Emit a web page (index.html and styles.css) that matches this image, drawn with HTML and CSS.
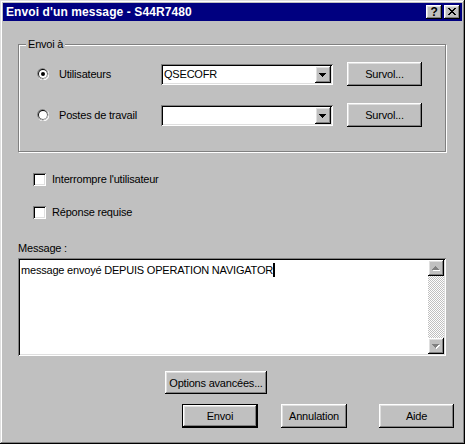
FILE: index.html
```
<!DOCTYPE html>
<html lang="fr">
<head>
<meta charset="utf-8">
<title>Envoi d'un message - S44R7480</title>
<link rel="stylesheet" href="styles.css">
</head>
<body>
<div class="window">
  <div class="titlebar">
    <span class="title">Envoi d'un message - S44R7480</span>
    <div class="tbtns">
      <span class="tbtn raised help">?</span>
      <span class="tbtn raised">
        <svg width="16" height="14" viewBox="0 0 16 14" shape-rendering="crispEdges">
          <g fill="#000">
            <rect x="4" y="3" width="2" height="1"/><rect x="10" y="3" width="2" height="1"/>
            <rect x="5" y="4" width="2" height="1"/><rect x="9" y="4" width="2" height="1"/>
            <rect x="6" y="5" width="4" height="1"/>
            <rect x="7" y="6" width="2" height="1"/>
            <rect x="6" y="7" width="4" height="1"/>
            <rect x="5" y="8" width="2" height="1"/><rect x="9" y="8" width="2" height="1"/>
            <rect x="4" y="9" width="2" height="1"/><rect x="10" y="9" width="2" height="1"/>
          </g>
        </svg>
      </span>
    </div>
  </div>

  <div class="content">
    <fieldset class="group">
      <legend class="legend">Envoi à</legend>
      <div class="group-body">
        <div class="row">
          <label class="radio">
            <svg class="rb" width="12" height="12" viewBox="0 0 12 12">
              <circle cx="6.3" cy="6.3" r="6" fill="#fff"/>
              <circle cx="5.7" cy="5.7" r="5.7" fill="#808080"/>
              <circle cx="6.1" cy="6.1" r="5" fill="#dfdfdf"/>
              <circle cx="5.8" cy="5.8" r="4.7" fill="#000"/>
              <circle cx="6" cy="6" r="4" fill="#fff"/>
              <circle cx="6" cy="6" r="2" fill="#000"/>
            </svg>
            <span>Utilisateurs</span>
          </label>
          <div class="combo sunken">
            <span class="combo-text">QSECOFR</span>
            <span class="drop raised">
              <svg width="16" height="17" viewBox="0 0 16 17" shape-rendering="crispEdges">
                <g fill="#000">
                  <rect x="4" y="7" width="7" height="1"/>
                  <rect x="5" y="8" width="5" height="1"/>
                  <rect x="6" y="9" width="3" height="1"/>
                  <rect x="7" y="10" width="1" height="1"/>
                </g>
              </svg>
            </span>
          </div>
          <button class="btn raised survol">Survol...</button>
        </div>
        <div class="row">
          <label class="radio">
            <svg class="rb" width="12" height="12" viewBox="0 0 12 12">
              <circle cx="6.3" cy="6.3" r="6" fill="#fff"/>
              <circle cx="5.7" cy="5.7" r="5.7" fill="#808080"/>
              <circle cx="6.1" cy="6.1" r="5" fill="#dfdfdf"/>
              <circle cx="5.8" cy="5.8" r="4.7" fill="#000"/>
              <circle cx="6" cy="6" r="4" fill="#fff"/>
            </svg>
            <span>Postes de travail</span>
          </label>
          <div class="combo sunken">
            <span class="combo-text"></span>
            <span class="drop raised">
              <svg width="16" height="17" viewBox="0 0 16 17" shape-rendering="crispEdges">
                <g fill="#000">
                  <rect x="4" y="7" width="7" height="1"/>
                  <rect x="5" y="8" width="5" height="1"/>
                  <rect x="6" y="9" width="3" height="1"/>
                  <rect x="7" y="10" width="1" height="1"/>
                </g>
              </svg>
            </span>
          </div>
          <button class="btn raised survol">Survol...</button>
        </div>
      </div>
    </fieldset>

    <div class="checks">
      <label class="check"><span class="cb sunken"></span><span>Interrompre l'utilisateur</span></label>
      <label class="check"><span class="cb sunken"></span><span>Réponse requise</span></label>
    </div>

    <div class="msg-label">Message :</div>
    <div class="memo sunken">
      <div class="memo-text">message envoyé DEPUIS OPERATION NAVIGATOR<span class="caret"></span></div>
      <div class="vscroll">
        <span class="sbtn raised">
          <svg width="16" height="16" viewBox="0 0 16 16" shape-rendering="crispEdges">
            <g fill="#fff">
              <rect x="8" y="7" width="1" height="1"/><rect x="7" y="8" width="3" height="1"/>
              <rect x="6" y="9" width="5" height="1"/><rect x="5" y="10" width="7" height="1"/>
            </g>
            <g fill="#808080">
              <rect x="7" y="6" width="1" height="1"/><rect x="6" y="7" width="3" height="1"/>
              <rect x="5" y="8" width="5" height="1"/><rect x="4" y="9" width="7" height="1"/>
            </g>
          </svg>
        </span>
        <span class="track"></span>
        <span class="sbtn raised">
          <svg width="16" height="16" viewBox="0 0 16 16" shape-rendering="crispEdges">
            <g fill="#fff">
              <rect x="5" y="7" width="7" height="1"/><rect x="6" y="8" width="5" height="1"/>
              <rect x="7" y="9" width="3" height="1"/><rect x="8" y="10" width="1" height="1"/>
            </g>
            <g fill="#808080">
              <rect x="4" y="6" width="7" height="1"/><rect x="5" y="7" width="5" height="1"/>
              <rect x="6" y="8" width="3" height="1"/><rect x="7" y="9" width="1" height="1"/>
            </g>
          </svg>
        </span>
      </div>
    </div>

    <div class="opt-row">
      <button class="btn raised options">Options avancées...</button>
    </div>

    <div class="actions">
      <button class="btn raised default envoi">Envoi</button>
      <button class="btn raised annul">Annulation</button>
      <button class="btn raised aide">Aide</button>
    </div>
  </div>
</div>
</body>
</html>
```
FILE: styles.css
```
html, body {
  margin: 0;
  padding: 0;
  background: #c0c0c0;
}

body {
  font-family: "Liberation Sans", Arial, sans-serif;
  font-size: 11px;
  letter-spacing: -0.2px;
  color: #000;
}

.window {
  width: 465px;
  height: 444px;
  box-sizing: border-box;
  padding: 3px;
  background: #c0c0c0;
  box-shadow: inset -1px -1px #000, inset 1px 1px #dfdfdf, inset -2px -2px #808080, inset 2px 2px #fff;
  display: flex;
  flex-direction: column;
}

.raised {
  background: #c0c0c0;
  box-shadow: inset -1px -1px #000, inset 1px 1px #fff, inset -2px -2px #808080, inset 2px 2px #dfdfdf;
}

.sunken {
  background: #fff;
  box-shadow: inset 1px 1px #808080, inset -1px -1px #fff, inset 2px 2px #000, inset -2px -2px #dfdfdf;
}

/* Title bar */
.titlebar {
  height: 18px;
  flex: none;
  background: #000080;
  color: #fff;
  display: flex;
  align-items: center;
  justify-content: space-between;
  padding: 0 2px 0 3px;
}

.title {
  font-weight: bold;
  font-size: 12px;
  letter-spacing: 0.1px;
}

.tbtns {
  display: flex;
  gap: 2px;
}

.tbtn {
  width: 16px;
  height: 14px;
  display: flex;
  align-items: center;
  justify-content: center;
  color: #000;
}

.tbtn.help {
  font-weight: bold;
  font-size: 12px;
  line-height: 14px;
}

/* Content */
.content {
  flex: 1;
  display: flex;
  flex-direction: column;
}

.group {
  margin: 17px 0 0 15px;
  padding: 0;
  width: 428px;
  box-sizing: border-box;
  border: 1px solid #808080;
  box-shadow: 1px 1px #fff, inset 1px 1px #fff;
  min-width: 0;
}

.legend {
  margin-left: 7px;
  padding: 0 2px;
  line-height: 13px;
  background: #c0c0c0;
}

.group-body {
  padding: 11px 0 24px 18px;
}

.row {
  display: flex;
  align-items: center;
  height: 24px;
}

.row + .row {
  margin-top: 17px;
}

.radio {
  width: 124px;
  display: flex;
  align-items: center;
  gap: 10px;
}

.rb {
  flex: none;
}

.combo {
  width: 172px;
  height: 21px;
  box-sizing: border-box;
  padding: 2px;
  display: flex;
  align-items: center;
  justify-content: space-between;
}

.combo-text {
  padding-left: 1px;
}

.drop {
  width: 16px;
  height: 17px;
  display: block;
}

.drop svg {
  display: block;
}

.btn {
  font: inherit;
  letter-spacing: inherit;
  color: #000;
  border: 0;
  padding: 0;
  margin: 0;
  height: 23px;
  display: flex;
  align-items: center;
  justify-content: center;
}

.survol {
  width: 75px;
  height: 24px;
  margin-left: 14px;
}

/* Checkboxes */
.checks {
  margin: 21px 0 0 30px;
  display: flex;
  flex-direction: column;
  gap: 20px;
}

.check {
  display: flex;
  align-items: center;
  gap: 6px;
  line-height: 13px;
}

.cb {
  width: 13px;
  height: 13px;
  display: block;
}

/* Message */
.msg-label {
  margin: 23px 0 0 15px;
  line-height: 13px;
}

.memo {
  margin: 3px 0 0 15px;
  width: 428px;
  height: 98px;
  box-sizing: border-box;
  padding: 2px;
  display: flex;
}

.memo-text {
  flex: 1;
  padding: 3px 0 0 1px;
  line-height: 13px;
  white-space: nowrap;
}

.caret {
  display: inline-block;
  width: 2px;
  height: 14px;
  background: #000;
  vertical-align: -3px;
}

.vscroll {
  width: 16px;
  display: flex;
  flex-direction: column;
}

.sbtn {
  width: 16px;
  height: 16px;
  display: block;
}

.sbtn svg {
  display: block;
}

.track {
  flex: 1;
  background: repeating-conic-gradient(#fff 0 25%, #c0c0c0 0 50%) 0 0 / 2px 2px;
}

/* Buttons */
.opt-row {
  margin: 15px 0 0 162px;
  display: flex;
}

.options {
  width: 102px;
  height: 23px;
}

.actions {
  margin-top: 10px;
  display: flex;
}

.actions .btn {
  height: 24px;
}

.envoi {
  width: 76px;
  margin-left: 179px;
}

.default {
  box-shadow: inset 0 0 0 1px #000, inset -2px -2px #000, inset 2px 2px #fff, inset -3px -3px #808080, inset 3px 3px #dfdfdf;
}

.annul {
  width: 66px;
  margin-left: 23px;
}

.aide {
  width: 75px;
  margin-left: 32px;
}
```
